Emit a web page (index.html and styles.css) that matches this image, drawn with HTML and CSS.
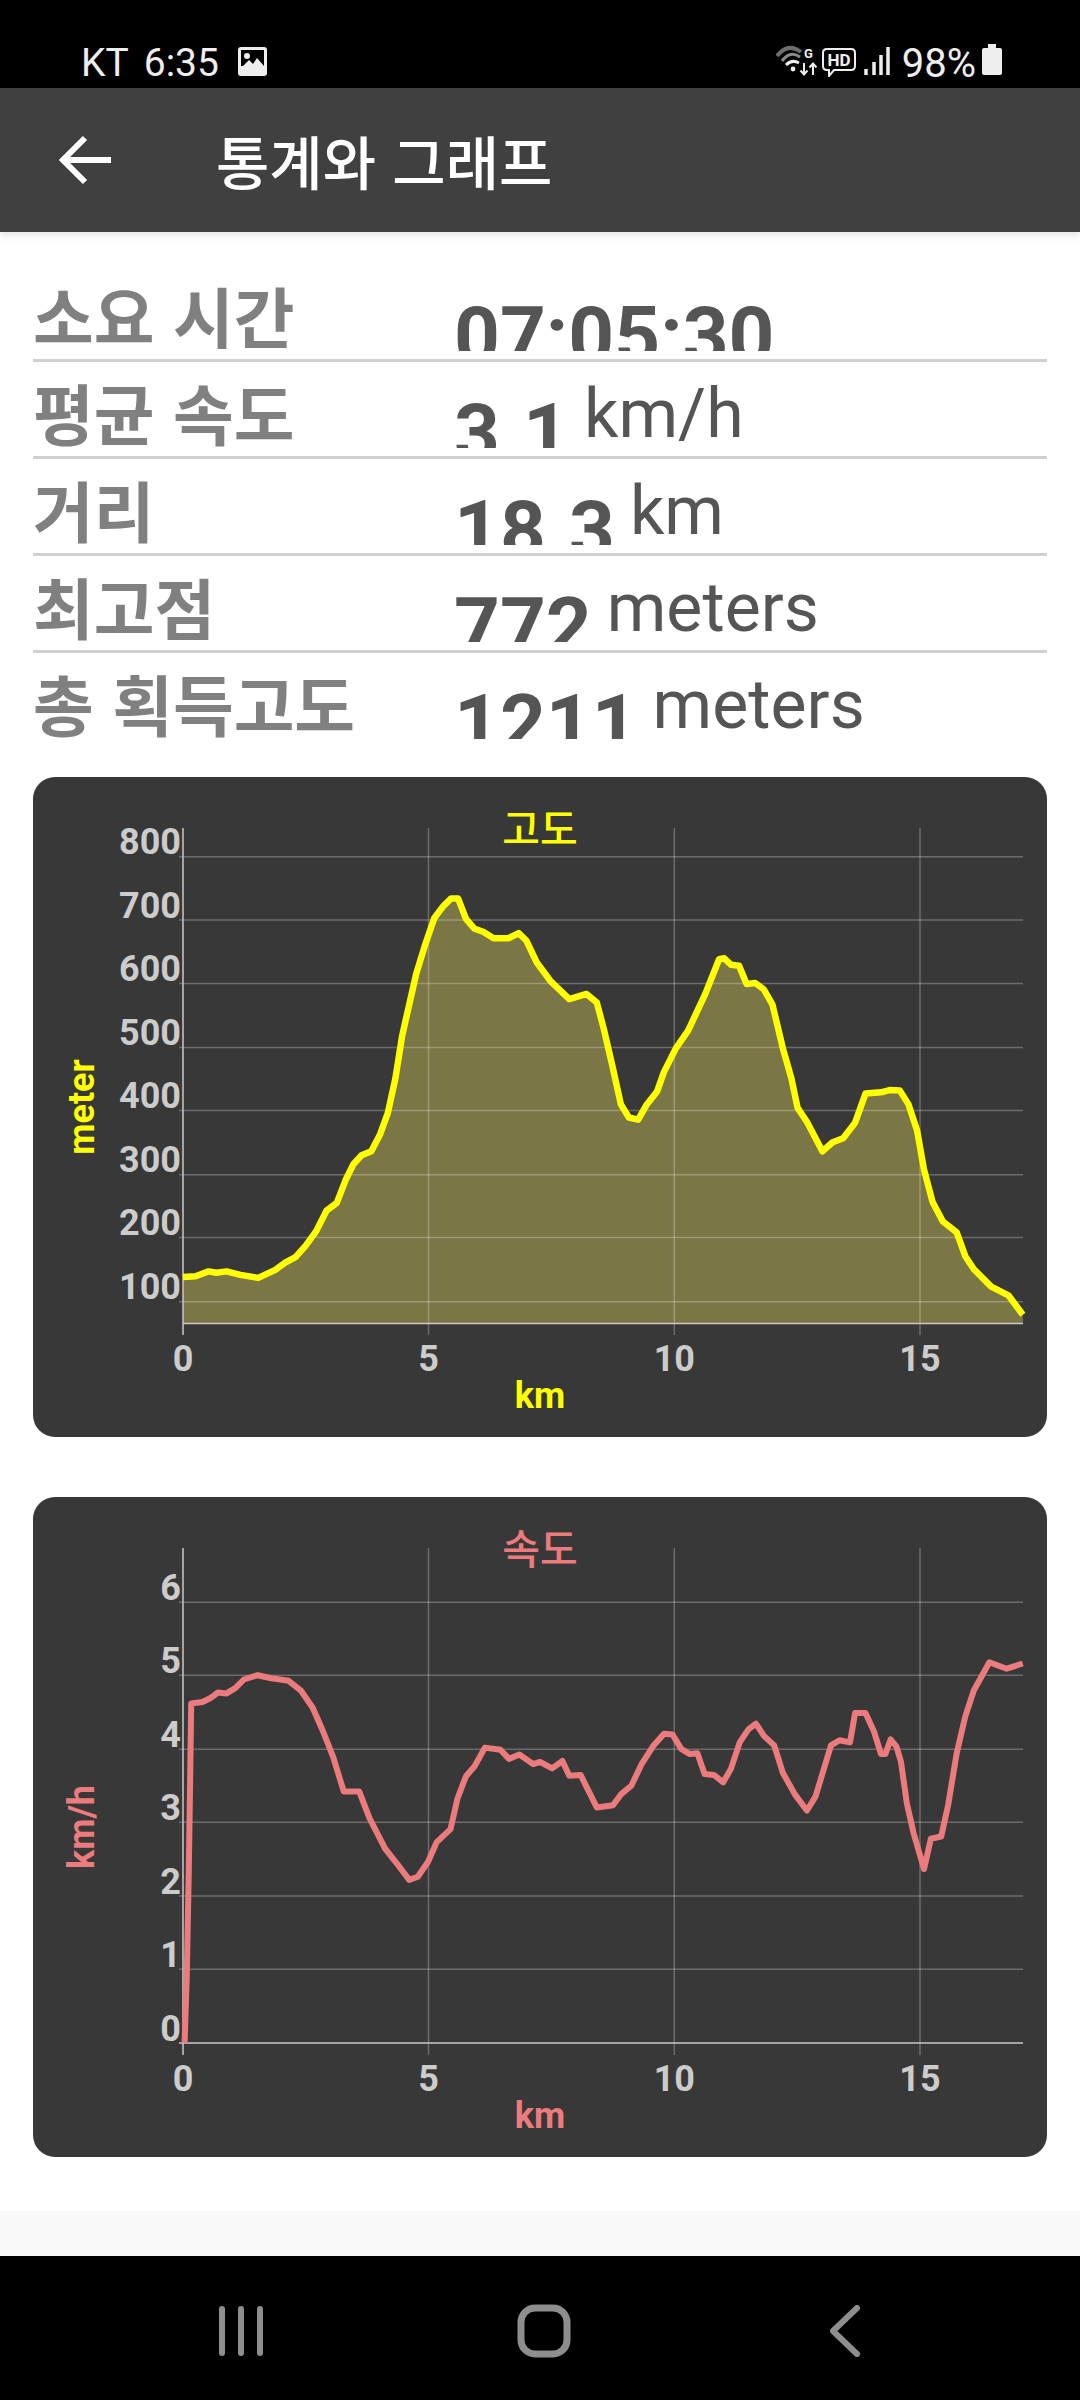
FILE: index.html
```html
<!DOCTYPE html>
<html lang="ko">
  <head>
    <meta charset="UTF-8">
    <meta name="viewport" content="width=device-width, initial-scale=1.0">
    <title>통계와 그래프</title>
    <link rel="stylesheet" href="styles.css">
  </head>
  <body>
    <div class="status">
      <div class="status-left">
        <span>KT</span>
        <span class="clock">6:35</span>
        <svg class="pic-icon" width="29" height="29" viewBox="0 0 29 29">
          <rect width="29" height="29" rx="3" fill="#eee"/>
          <rect x="3" y="3" width="23" height="16" fill="#000"/>
          <circle cx="9" cy="9" r="3" fill="#eee"/>
          <path d="M3 21 L11 13 L15 17 L19 11 L26 19 V23 H3 Z" fill="#eee"/>
        </svg>
      </div>
      <div class="status-right">
        <svg class="net-icons" width="115" height="33" viewBox="0 0 115 33">
          <path d="M1 12 Q12 -2 25 8" fill="none" stroke="#6e6e6e" stroke-width="4"/>
          <path d="M6 17 Q14 6 24 13" fill="none" stroke="#8a8a8a" stroke-width="3"/>
          <path d="M10 21 Q16 15 23 19" fill="none" stroke="#eee" stroke-width="3"/>
          <circle cx="17" cy="25" r="2.4" fill="#eee"/>
          <text class="net-g" x="28" y="14">G</text>
          <path d="M28 19 V30 M24.5 26.5 L28 30.5 L31.5 26.5 M37 31 V20 M33.5 23.5 L37 19.5 L40.5 23.5" fill="none" stroke="#eee" stroke-width="2"/>
          <path d="M51 5 H75 Q79 5 79 9 V22 Q79 26 75 26 H58 L53 32 V26 H51 Q47 26 47 22 V9 Q47 5 51 5 Z" fill="none" stroke="#eee" stroke-width="2"/>
          <text class="net-hd" x="63" y="22">HD</text>
          <path d="M90 25 V31 M98 18 V31 M105 11 V31 M112 3 V31" stroke="#eee" stroke-width="3.5"/>
        </svg>
        <span class="battery-text">98%</span>
        <svg width="20" height="31" viewBox="0 0 20 31">
          <path d="M6 0 H14 V4 H18 Q20 4 20 6 V29 Q20 31 18 31 H2 Q0 31 0 29 V6 Q0 4 2 4 H6 Z" fill="#eee"/>
        </svg>
      </div>
    </div>

    <header class="toolbar">
      <svg class="back" width="56" height="50" viewBox="0 0 56 50">
        <path d="M54 25 H6 M28 3 L6 25 L28 47" fill="none" stroke="#fff" stroke-width="6"/>
      </svg>
      <h1>통계와 그래프</h1>
    </header>

    <main class="content">
      <section class="stats">
        <div class="row">
          <div class="label">소요 시간</div>
          <div class="value"><span class="num">07:05:30</span></div>
        </div>
        <div class="row">
          <div class="label">평균 속도</div>
          <div class="value"><span class="num">3.1</span><span class="unit">km/h</span></div>
        </div>
        <div class="row">
          <div class="label">거리</div>
          <div class="value"><span class="num">18.3</span><span class="unit">km</span></div>
        </div>
        <div class="row">
          <div class="label">최고점</div>
          <div class="value"><span class="num">772</span><span class="unit">meters</span></div>
        </div>
        <div class="row">
          <div class="label">총 획득고도</div>
          <div class="value"><span class="num">1211</span><span class="unit">meters</span></div>
        </div>
      </section>

      <div class="chart chart-elevation">
        <svg width="1014" height="660" viewBox="0 0 1014 660">
          <polygon class="area" points="150,546.5 150,500 162.6,499.2 175.7,494.4 183.3,495.7 193.6,494.4 207.4,497.9 225.3,500.9 241.9,493.1 252.2,485.7 262.5,480.1 272.9,468.4 283.2,454.1 293.5,433.7 303.8,425.9 312.5,403.3 320.4,387.3 328.6,378.2 338.3,374.3 346.9,357.8 354.8,336.1 362.4,301.4 369.3,258.1 376.2,227.7 383.1,197.3 391.7,169.1 401.3,141 410.6,128.8 418.2,121.4 425.1,121.4 433,141.8 441.6,151.8 450.2,154.8 460.6,161.3 475.4,161.3 485.7,156.1 493.3,163.5 503.6,185.2 517.3,203.8 536.3,222.1 553.5,216.9 563.8,225.5 570.7,251.5 579.3,288.4 587.9,327.4 595.9,340.5 605.2,342.6 613.8,327.4 624.1,314.4 631,294.9 643,271.1 655.1,253.7 672.3,216.9 686.1,182.2 691.3,181.3 698.1,187.8 706.1,188.7 713.6,206.9 722.3,206 730.9,212.5 739.5,227.7 749.8,271.1 758.4,301.4 764.6,330.9 773.9,344.8 789.4,374.3 799.7,365.2 810.1,361.3 822.1,345.7 832.5,316.6 848,315.3 856.6,313.1 866.9,313.6 875.5,327.4 884.1,353.5 891,392.5 899.6,425 909.9,444.5 923.7,455.4 932.3,479.2 940.9,492.2 958.2,509.6 975.4,518.3 989.8,537.8 990,546.5"/>
          <g class="grid">
            <path d="M146 79.8 H990 M146 143.1 H990 M146 206.4 H990 M146 270.6 H990 M146 333.5 H990 M146 397.7 H990 M146 460.6 H990 M146 524.8 H990"/>
            <path d="M395.5 51 V558 M641.3 51 V558 M887 51 V558"/>
          </g>
          <path class="axis" d="M150 51 V558 M150 546.5 H990"/>
          <polyline class="line" points="150,500 162.6,499.2 175.7,494.4 183.3,495.7 193.6,494.4 207.4,497.9 225.3,500.9 241.9,493.1 252.2,485.7 262.5,480.1 272.9,468.4 283.2,454.1 293.5,433.7 303.8,425.9 312.5,403.3 320.4,387.3 328.6,378.2 338.3,374.3 346.9,357.8 354.8,336.1 362.4,301.4 369.3,258.1 376.2,227.7 383.1,197.3 391.7,169.1 401.3,141 410.6,128.8 418.2,121.4 425.1,121.4 433,141.8 441.6,151.8 450.2,154.8 460.6,161.3 475.4,161.3 485.7,156.1 493.3,163.5 503.6,185.2 517.3,203.8 536.3,222.1 553.5,216.9 563.8,225.5 570.7,251.5 579.3,288.4 587.9,327.4 595.9,340.5 605.2,342.6 613.8,327.4 624.1,314.4 631,294.9 643,271.1 655.1,253.7 672.3,216.9 686.1,182.2 691.3,181.3 698.1,187.8 706.1,188.7 713.6,206.9 722.3,206 730.9,212.5 739.5,227.7 749.8,271.1 758.4,301.4 764.6,330.9 773.9,344.8 789.4,374.3 799.7,365.2 810.1,361.3 822.1,345.7 832.5,316.6 848,315.3 856.6,313.1 866.9,313.6 875.5,327.4 884.1,353.5 891,392.5 899.6,425 909.9,444.5 923.7,455.4 932.3,479.2 940.9,492.2 958.2,509.6 975.4,518.3 989.8,537.8"/>
          <text class="title" x="507" y="67">고도</text>
          <g class="ticks-y">
            <text x="148" y="77">800</text>
            <text x="148" y="141">700</text>
            <text x="148" y="204">600</text>
            <text x="148" y="268">500</text>
            <text x="148" y="331">400</text>
            <text x="148" y="395">300</text>
            <text x="148" y="458">200</text>
            <text x="148" y="522">100</text>
          </g>
          <g class="ticks-x">
            <text x="150" y="594">0</text>
            <text x="395.5" y="594">5</text>
            <text x="641.3" y="594">10</text>
            <text x="887" y="594">15</text>
          </g>
          <text class="axis-name" x="507" y="631">km</text>
          <text class="axis-name" transform="rotate(-90 61 330)" x="61" y="330">meter</text>
        </svg>
      </div>

      <div class="chart chart-speed">
        <svg width="1014" height="660" viewBox="0 0 1014 660">
          <g class="grid">
            <path d="M146 105.3 H990 M146 178.2 H990 M146 252.3 H990 M146 325.2 H990 M146 398.9 H990 M146 472.2 H990"/>
            <path d="M395.5 51 V558 M641.3 51 V558 M887 51 V558"/>
          </g>
          <path class="axis" d="M150 51 V558 M146 546 H990"/>
          <polyline class="line" points="151.6,546 153.7,481.8 155.8,373.3 157.1,286.6 158.2,206.4 169.5,205 178.1,200.7 185,195.5 193.6,196.4 202.3,191.2 210.9,182.5 224.6,178.2 238.4,181.2 255.6,183.8 267.7,193.3 279.7,210.7 290.1,234.5 300.4,260.6 310.7,294.4 326.2,294.4 336.6,321.3 352.1,351.6 364.1,366.8 376.2,382.9 384.8,379.8 395.1,364.7 403.7,345.1 417.5,332.1 424.4,301.8 433,279.2 441.6,269.2 451.9,250.6 467.4,252.8 476,261.9 486.4,257.5 500.2,267.1 507,264.9 519.1,271.4 529.4,264 536.3,278.8 547.6,277.9 563.8,310.4 580,308.3 587.9,297.4 598.3,288.8 608.6,267.1 620.6,248.4 631,236.7 639.6,237.6 648.2,251.9 656.8,257.1 664.4,256.2 671.6,277 680.9,277.9 690.2,285.3 698.1,271.4 706.7,245.4 715.4,232.4 722.9,226.7 730.9,238.9 741.2,248.4 749.8,275.7 761.9,297.4 773.9,313.5 782.5,299.6 798,248.4 806.6,243.2 817,245.4 822.1,215.9 832.5,215.9 841,234.5 848,257.1 852.4,257.1 857.6,242.4 863.5,249.7 868,264.9 873.8,306.1 880.7,336.5 891,372 897.9,341.7 908.2,339.5 915.1,308.3 923.7,256.2 932.3,219.4 940.9,193.3 956.4,165.2 973.6,171.7 989.8,166.5"/>
          <text class="title" x="507" y="67">속도</text>
          <g class="ticks-y">
            <text x="148" y="103">6</text>
            <text x="148" y="176">5</text>
            <text x="148" y="250">4</text>
            <text x="148" y="323">3</text>
            <text x="148" y="397">2</text>
            <text x="148" y="470">1</text>
            <text x="148" y="544">0</text>
          </g>
          <g class="ticks-x">
            <text x="150" y="594">0</text>
            <text x="395.5" y="594">5</text>
            <text x="641.3" y="594">10</text>
            <text x="887" y="594">15</text>
          </g>
          <text class="axis-name" x="507" y="631">km</text>
          <text class="axis-name" transform="rotate(-90 61 330)" x="61" y="330">km/h</text>
        </svg>
      </div>
    </main>

    <div class="strip"></div>

    <nav class="navbar">
      <svg width="44" height="50" viewBox="0 0 44 50">
        <path d="M3 3 V47 M22 3 V47 M41 3 V47" stroke="#8e8e8e" stroke-width="6" stroke-linecap="round"/>
      </svg>
      <svg width="54" height="54" viewBox="0 0 54 54">
        <rect x="4" y="4" width="46" height="46" rx="14" fill="none" stroke="#8e8e8e" stroke-width="7"/>
      </svg>
      <svg width="32" height="52" viewBox="0 0 32 52">
        <path d="M27 3 L3 26 L27 49" fill="none" stroke="#8e8e8e" stroke-width="6" stroke-linecap="round" stroke-linejoin="round"/>
      </svg>
    </nav>
  </body>
</html>
```
FILE: styles.css
```css
* {
  box-sizing: border-box;
}
body {
  margin: 0;
  width: 1080px;
  height: 2400px;
  display: flex;
  flex-direction: column;
  background: #fff;
  font-family: Roboto, "Noto Sans CJK KR", sans-serif;
  overflow: hidden;
}
.status {
  height: 88px;
  background: #000;
  color: #eee;
  display: flex;
  justify-content: space-between;
  padding: 44px 78px 0 81px;
  font-size: 39px;
  line-height: 38px;
}
.status-left {
  display: flex;
  align-items: flex-start;
}
.clock {
  margin-left: 15px;
}
.pic-icon {
  margin-left: 19px;
  margin-top: 3px;
}
.status-right {
  display: flex;
  align-items: flex-start;
}
.net-icons {
  margin-right: 11px;
}
.net-g {
  font-size: 13px;
  font-weight: 700;
  fill: #eee;
}
.net-hd {
  font-size: 17px;
  font-weight: 700;
  fill: #eee;
  text-anchor: middle;
}
.battery-text {
  margin-right: 6px;
  margin-top: 1px;
  font-size: 40px;
}
.toolbar {
  height: 144px;
  background: #404040;
  display: flex;
  align-items: center;
  padding-left: 57px;
  box-shadow: 0 3px 8px rgba(0, 0, 0, 0.12);
  position: relative;
}
.toolbar h1 {
  margin: 0 0 0 103px;
  color: #fff;
  font-family: "Noto Sans CJK KR", sans-serif;
  font-size: 58px;
  font-weight: 500;
  line-height: 60px;
}
.content {
  flex: 1;
  padding: 33px 33px 0;
}
.row {
  height: 97px;
  display: flex;
  border-bottom: 3px solid #d0d0d0;
}
.row:last-child {
  border-bottom: none;
}
.label {
  width: 421px;
  padding-top: 9px;
  color: #808080;
  font-family: "Noto Sans CJK KR", sans-serif;
  font-size: 66px;
  font-weight: 700;
  line-height: 80px;
  white-space: nowrap;
}
.value {
  display: flex;
  align-items: flex-start;
  color: #555;
}
.num {
  display: block;
  height: 86px;
  overflow: hidden;
  font-size: 80px;
  font-weight: 700;
  line-height: 142px;
}
.unit {
  margin-left: 15px;
  font-size: 68px;
  line-height: 86px;
  margin-top: 9px;
}
.chart {
  width: 1014px;
  height: 660px;
  margin-top: 27px;
  background: #383838;
  border-radius: 22px;
  overflow: hidden;
}
.chart + .chart {
  margin-top: 60px;
}
.chart svg {
  display: block;
}
.grid path {
  stroke: rgba(255, 255, 255, 0.26);
  stroke-width: 1.5;
  fill: none;
}
.axis {
  stroke: #c8c8c8;
  stroke-width: 1.5;
  fill: none;
}
.area {
  fill: #7b7646;
}
.line {
  fill: none;
  stroke-linejoin: round;
}
.chart-elevation .line {
  stroke: #ffff00;
  stroke-width: 6.5;
}
.chart-speed .line {
  stroke: #ec7b7d;
  stroke-width: 6;
}
.title {
  font-family: "Noto Sans CJK KR", sans-serif;
  font-size: 41px;
  font-weight: 500;
  text-anchor: middle;
}
.axis-name {
  font-size: 36px;
  font-weight: 700;
  text-anchor: middle;
}
.chart-elevation .title,
.chart-elevation .axis-name {
  fill: #ffff00;
}
.chart-speed .title,
.chart-speed .axis-name {
  fill: #ec7b7d;
}
.ticks-y text,
.ticks-x text {
  font-size: 36px;
  font-weight: 700;
  fill: #cccccc;
}
.ticks-y text {
  text-anchor: end;
}
.ticks-x text {
  text-anchor: middle;
}
.strip {
  height: 45px;
  background: #f9f9f9;
}
.navbar {
  height: 144px;
  background: #000;
  display: grid;
  grid-template-columns: 219px 44px 254px 54px 259px 32px;
  align-items: center;
  padding-top: 6px;
}
.navbar svg:nth-child(1) {
  grid-column: 2;
}
.navbar svg:nth-child(2) {
  grid-column: 4;
}
.navbar svg:nth-child(3) {
  grid-column: 6;
}
```
